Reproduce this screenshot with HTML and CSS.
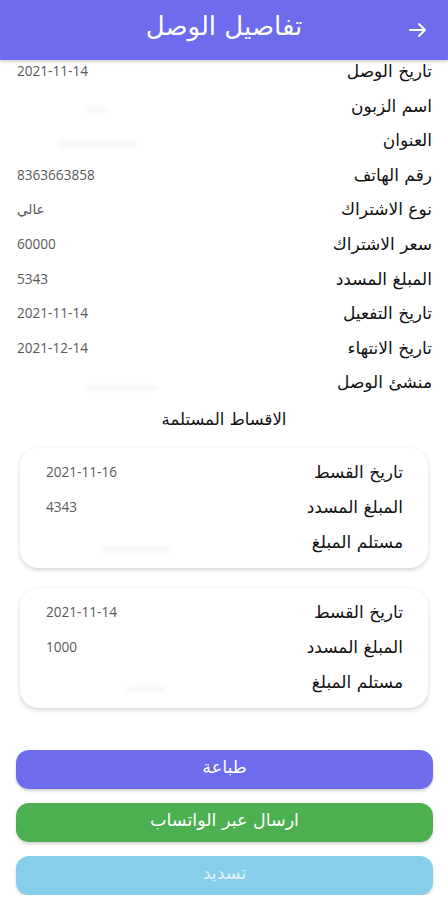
FILE: index.html
```html
<!DOCTYPE html>
<html lang="ar" dir="rtl">
<head>
<meta charset="utf-8">
<title>تفاصيل الوصل</title>
<link rel="stylesheet" href="styles.css">
</head>
<body>
<header class="appbar">
  <svg class="back" width="18" height="16" viewBox="0 0 18 16" aria-hidden="true">
    <path d="M1 8H16M10 2L16 8L10 14" fill="none" stroke="#fff" stroke-width="2" stroke-linecap="round" stroke-linejoin="round"/>
  </svg>
  <h1 class="title">تفاصيل الوصل</h1>
</header>

<main class="content">
  <section class="details">
    <div class="row"><span class="label">تاريخ الوصل</span><span class="value">2021-11-14</span></div>
    <div class="row"><span class="label">اسم الزبون</span><span class="value"><span class="smudge s1"></span></span></div>
    <div class="row"><span class="label">العنوان</span><span class="value"><span class="smudge s2"></span></span></div>
    <div class="row"><span class="label">رقم الهاتف</span><span class="value">8363663858</span></div>
    <div class="row"><span class="label">نوع الاشتراك</span><span class="value">عالي</span></div>
    <div class="row"><span class="label">سعر الاشتراك</span><span class="value">60000</span></div>
    <div class="row"><span class="label">المبلغ المسدد</span><span class="value">5343</span></div>
    <div class="row"><span class="label">تاريخ التفعيل</span><span class="value">2021-11-14</span></div>
    <div class="row"><span class="label">تاريخ الانتهاء</span><span class="value">2021-12-14</span></div>
    <div class="row"><span class="label">منشئ الوصل</span><span class="value"><span class="smudge s3"></span></span></div>
  </section>

  <h2 class="section-title">الاقساط المستلمة</h2>

  <section class="card">
    <div class="crow"><span class="label">تاريخ القسط</span><span class="value">2021-11-16</span></div>
    <div class="crow"><span class="label">المبلغ المسدد</span><span class="value">4343</span></div>
    <div class="crow"><span class="label">مستلم المبلغ</span><span class="value"><span class="smudge s4"></span></span></div>
  </section>

  <section class="card">
    <div class="crow"><span class="label">تاريخ القسط</span><span class="value">2021-11-14</span></div>
    <div class="crow"><span class="label">المبلغ المسدد</span><span class="value">1000</span></div>
    <div class="crow"><span class="label">مستلم المبلغ</span><span class="value"><span class="smudge s5"></span></span></div>
  </section>

  <div class="actions">
    <button class="btn btn-print">طباعة</button>
    <button class="btn btn-whatsapp">ارسال عبر الواتساب</button>
    <button class="btn btn-pay">تسديد</button>
  </div>
</main>
</body>
</html>
```

FILE: styles.css
```css
* { box-sizing: border-box; }

html, body {
  margin: 0;
  padding: 0;
  background: #ffffff;
}

body {
  width: 448px;
  font-family: "DejaVu Sans", sans-serif;
  color: #111;
}

.appbar {
  height: 60px;
  background: #6c6ced;
  display: flex;
  align-items: center;
  justify-content: center;
  position: relative;
  box-shadow: 0 2px 3px rgba(0,0,0,0.18);
  z-index: 2;
}

.title {
  margin: 0;
  font-size: 26px;
  font-weight: normal;
  color: #fff;
  line-height: 1;
  padding-bottom: 8px;
}

.back {
  position: absolute;
  right: 21px;
  top: 22px;
}

.content {
  display: flex;
  flex-direction: column;
}

.details {
  padding: 0 16px 0 17px;
}

.row {
  height: 34.6px;
  display: flex;
  justify-content: space-between;
  align-items: flex-start;
}

.label {
  font-size: 17px;
  line-height: 22px;
  color: #111;
  letter-spacing: -0.2px;
}

.value {
  font-family: "Open Sans", "DejaVu Sans", sans-serif;
  font-size: 13.6px;
  line-height: 22px;
  color: #5a5a5a;
  direction: ltr;
  display: flex;
  align-items: center;
  height: 22px;
}

.smudge {
  display: block;
  height: 4px;
  border-radius: 2px;
  background: #f2f2f2;
  filter: blur(2px);
}
.s1 { width: 20px; margin-left: 70px; margin-top: 8px; }
.s2 { width: 80px; margin-left: 40px; margin-top: 8px; }
.s3 { width: 70px; margin-left: 70px; margin-top: 12px; }
.s4 { width: 70px; margin-left: 55px; margin-top: 14px; }
.s5 { width: 40px; margin-left: 80px; margin-top: 14px; }

.section-title {
  margin: 3px 0 0;
  text-align: center;
  font-size: 16.5px;
  font-weight: normal;
  line-height: 22px;
  color: #111;
  letter-spacing: -0.2px;
}

.card {
  margin: 17px 20px 0 20px;
  padding: 13px 25px 15px 26px;
  border-radius: 18px;
  background: #fff;
  box-shadow: 0 2px 4px rgba(0,0,0,0.16), 0 0 1px rgba(0,0,0,0.08);
}

.card + .card {
  margin-top: 20px;
}

.crow {
  height: 35px;
  display: flex;
  justify-content: space-between;
  align-items: flex-start;
}

.crow:last-child {
  height: 22px;
}

.actions {
  margin: 42px 15px 0 16px;
  display: flex;
  flex-direction: column;
  gap: 14px;
}

.btn {
  height: 39px;
  border: none;
  border-radius: 13px;
  font-family: "DejaVu Sans", sans-serif;
  font-size: 17.5px;
  color: #fff;
  padding: 0 0 4px;
  box-shadow: 0 2px 3px rgba(0,0,0,0.18);
}

.btn-print { background: #6c6ced; }
.btn-whatsapp { background: #4caf50; }
.btn-pay { background: #87ceeb; color: rgba(255,255,255,0.75); }
```
